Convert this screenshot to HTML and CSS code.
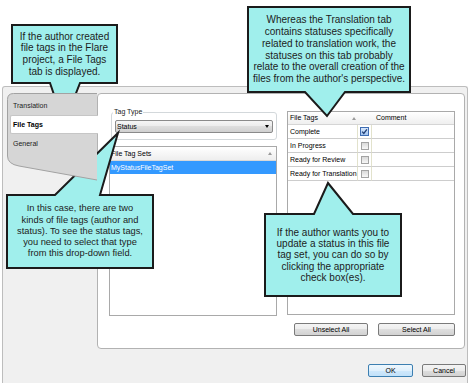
FILE: index.html
```html
<!DOCTYPE html>
<html>
<head>
<meta charset="utf-8">
<link rel="stylesheet" href="styles.css">
</head>
<body>
<div class="stage">
  <div class="dialog">
    <div class="main">
      <div class="tabs">
        <svg class="tabs-bg" width="90" height="90" viewBox="0 0 90 90">
          <path d="M90,0.5 H6.5 Q0.5,0.5 0.5,6.5 V63 Q0.5,71 12,73 L90,87 Z" fill="#d6d6d6"/>
          <path d="M90,0.5 H6.5 Q0.5,0.5 0.5,6.5 V63 Q0.5,71 12,73 L90,87" fill="none" stroke="#a2a2a2"/>
        </svg>
        <div class="tab first">Translation</div>
        <div class="tab active">File Tags</div>
        <div class="tab">General</div>
      </div>
      <div class="panel">
        <div class="col-left">
          <fieldset class="group">
            <legend>Tag Type</legend>
            <div class="combo"><span>Status</span><span class="caret"></span></div>
          </fieldset>
          <div class="list">
            <div class="list-head"><span>File Tag Sets</span><span class="sort"></span></div>
            <div class="list-row selected">MyStatusFileTagSet</div>
          </div>
        </div>
        <div class="col-right">
          <div class="grid">
            <div class="hcell first-h"><span>File Tags</span><span class="sort"></span></div>
            <div class="hcell"></div>
            <div class="hcell comment-h">Comment</div>

            <div class="cell">Complete</div>
            <div class="cell ccell">
              <svg class="cbsvg" width="9" height="9" viewBox="0 0 9 9">
                <defs><linearGradient id="cbg" x1="0" y1="0" x2="0" y2="1"><stop offset="0" stop-color="#dbe9fb"/><stop offset="1" stop-color="#9cc0ee"/></linearGradient></defs>
                <rect x="0.5" y="0.5" width="8" height="8" fill="url(#cbg)" stroke="#3e6db3"/>
                <path d="M2.2,4.6 L3.8,6.4 L6.9,2.3" fill="none" stroke="#1f3e74" stroke-width="1.3"/>
              </svg>
            </div>
            <div class="cell"></div>

            <div class="cell">In Progress</div>
            <div class="cell ccell"><span class="cb"></span></div>
            <div class="cell"></div>

            <div class="cell">Ready for Review</div>
            <div class="cell ccell"><span class="cb"></span></div>
            <div class="cell"></div>

            <div class="cell">Ready for Translation</div>
            <div class="cell ccell"><span class="cb"></span></div>
            <div class="cell"></div>
          </div>
          <div class="btn-row">
            <button class="btn w-unselect">Unselect All</button>
            <button class="btn w-select">Select All</button>
          </div>
        </div>
      </div>
    </div>
    <div class="footer">
      <button class="btn ok">OK</button>
      <button class="btn w-cancel">Cancel</button>
    </div>
  </div>

  <div class="callout c1">
    <svg width="105" height="58"><path d="M0,0 H105 V58 H68 L52,99 L38,58 H0 Z"/></svg>
    <p>If the author created<br>file tags in the Flare<br>project, a File Tags<br>tab is displayed.</p>
  </div>
  <div class="callout c2">
    <svg width="162" height="85"><path d="M0,0 H162 V85 H97 L79,109 L57,85 H0 Z"/></svg>
    <p>Whereas the Translation tab<br>contains statuses specifically<br>related to translation work, the<br>statuses on this tab probably<br>relate to the overall creation of the<br>files from the author's perspective.</p>
  </div>
  <div class="callout c3">
    <svg width="146" height="73"><path d="M0,0 H48 L111,-62 L93,0 H146 V73 H0 Z"/></svg>
    <p>In this case, there are two<br>kinds of file tags (author and<br>status). To see the status tags,<br>you need to select that type<br>from this drop-down field.</p>
  </div>
  <div class="callout c4">
    <svg width="136" height="82"><path d="M0,0 H49 L63,-31 L88,0 H136 V82 H0 Z"/></svg>
    <p>If the author wants you to<br>update a status in this file<br>tag set, you can do so by<br>clicking the appropriate<br>check box(es).</p>
  </div>
</div>
</body>
</html>
```

FILE: styles.css
```css
* { box-sizing: border-box; }
html, body { margin: 0; padding: 0; background: #fff; }
body { font-family: "Liberation Sans", Arial, sans-serif; color: #000; }

.stage {
  position: relative;
  width: 474px;
  height: 385px;
  overflow: hidden;
  padding-top: 86px;
  padding-left: 2px;
}

.dialog {
  width: 466px;
  height: 297px;
  background: #f0f0f0;
  border: 1px solid #bdbdbd;
  border-bottom: none;
  border-radius: 3px 3px 0 0;
  padding: 6px 2px 0 4px;
  display: flex;
  flex-direction: column;
}

.main { display: flex; height: 256px; }

.tabs {
  position: relative;
  z-index: 2;
  flex: none;
  width: 90px;
  height: 90px;
  padding-top: 4px;
}
.tabs-bg { position: absolute; left: 0; top: 0; }
.tab {
  position: relative;
  height: 19px;
  line-height: 19px;
  padding-left: 6px;
  font-size: 7px;
  color: #222;
}
.tab.first { height: 18px; line-height: 18px; }
.tab.active {
  background: #fff;
  margin-left: 3px;
  margin-right: -1px;
  padding-left: 2px;
  line-height: 17px;
  font-weight: bold;
  color: #000;
  border: 1px solid #c6c6c6;
  border-right: none;
  border-radius: 2px 0 0 2px;
}

.panel {
  flex: 1;
  height: 256px;
  background: #fff;
  border: 1px solid #b2b2b2;
  border-radius: 4px;
  display: flex;
  gap: 10px;
  padding: 14px 9px 0 11px;
}

.col-left { width: 168px; display: flex; flex-direction: column; }
.col-right { width: 168px; margin-top: 3px; }

.group {
  margin: 0 0 0 2px;
  padding: 4px 3px 6px 3px;
  border: 1px solid #d3d8db;
  border-radius: 3px;
  min-width: 0;
}
.group legend {
  font-size: 7px;
  line-height: 8px;
  padding: 0 1px;
  margin-left: -2px;
  color: #222;
}

.combo {
  height: 13px;
  border: 1px solid #8a8a8a;
  border-radius: 2px;
  background: linear-gradient(#f5f5f5, #ebebeb 50%, #dddddd 50%, #d0d0d0);
  display: flex;
  align-items: center;
  justify-content: space-between;
  padding: 0 3px 0 1px;
  font-size: 7px;
}
.caret {
  width: 0; height: 0;
  border-left: 2.5px solid transparent;
  border-right: 2.5px solid transparent;
  border-top: 3px solid #000;
}

.list {
  margin-top: 6px;
  height: 170px;
  border: 1px solid #a9a9a9;
  background: #fff;
}
.list-head {
  height: 14px;
  border-bottom: 1px solid #d8d8d8;
  background: linear-gradient(#ffffff, #eeeeee);
  display: flex;
  justify-content: space-between;
  align-items: center;
  padding: 0 4px 0 1px;
  font-size: 7px;
}
.sort {
  width: 0; height: 0;
  border-left: 2.5px solid transparent;
  border-right: 2.5px solid transparent;
  border-bottom: 3px solid #9a9a9a;
}
.list-row {
  height: 13px;
  line-height: 13px;
  padding-left: 1px;
  font-size: 7px;
}
.list-row.selected { background: #3399ff; color: #fff; }

.grid {
  height: 204px;
  border: 1px solid #a9a9a9;
  background: #fff;
  display: grid;
  grid-template-columns: 69px 15px 1fr;
  grid-template-rows: 13px repeat(4, 14px);
  align-content: start;
  font-size: 7px;
}
.hcell {
  background: linear-gradient(#ffffff, #efefef);
  border-bottom: 1px solid #d5d5d5;
  line-height: 12px;
}
.first-h {
  display: flex;
  justify-content: space-between;
  align-items: center;
  padding: 0 1px 0 2px;
}
.comment-h { padding-left: 4px; }
.cell {
  border-bottom: 1px solid #cdcdcd;
  line-height: 13px;
  padding-left: 2px;
  white-space: nowrap;
}
.ccell {
  padding-left: 0;
  border-left: 1px solid #e2e2cc;
  border-right: 1px solid #e2e2cc;
  display: flex;
  align-items: center;
  justify-content: center;
}
.cb {
  width: 8px;
  height: 8px;
  border: 1px solid #a3a3a3;
  background: linear-gradient(#d9d9d9, #f7f7f7);
}
.cbsvg { display: block; }

.btn {
  height: 13px;
  padding: 0;
  font-family: "Liberation Sans", Arial, sans-serif;
  font-size: 7px;
  line-height: 11px;
  color: #000;
  border: 1px solid #7a7a7a;
  border-radius: 2px;
  background: linear-gradient(#f4f4f4, #ececec 50%, #dedede 50%, #d2d2d2);
}
.btn-row {
  display: flex;
  justify-content: flex-end;
  gap: 10px;
  margin-top: 8px;
}
.w-unselect { width: 74px; }
.w-select { width: 77px; }

.footer {
  display: flex;
  justify-content: flex-end;
  gap: 9px;
  margin-top: 15px;
  margin-right: -1px;
}
.ok {
  width: 45px;
  border-color: #3c7fb1;
  background: linear-gradient(#eef7fd, #e0f0fc 50%, #cfe8fb 50%, #c2e1f9);
}
.w-cancel { width: 44px; }

.callout {
  position: absolute;
  display: flex;
  align-items: center;
  justify-content: center;
  text-align: center;
  color: #1c1c1c;
  white-space: nowrap;
}
.callout svg {
  position: absolute;
  left: 0;
  top: 0;
  overflow: visible;
}
.callout path {
  fill: #a0efec;
  stroke: #1b1b1b;
  stroke-width: 2;
  stroke-linejoin: miter;
}
.callout p {
  position: relative;
  margin: 0;
  font-size: 10px;
  line-height: 11.7px;
}
.c1 { left: 12px; top: 25px; width: 105px; height: 58px; }
.c2 { left: 248px; top: 7px; width: 162px; height: 85px; }
.c3 { left: 7px; top: 195px; width: 146px; height: 73px; }
.c3 p { font-size: 9.3px; line-height: 11.2px; }
.c4 { left: 265px; top: 214px; width: 136px; height: 82px; }
.c4 p { line-height: 11.25px; }
```
